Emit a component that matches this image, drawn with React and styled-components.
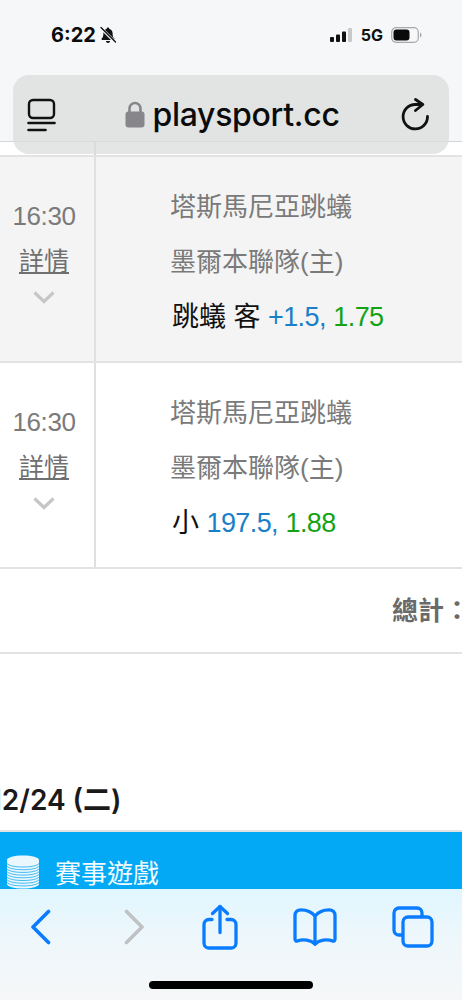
import React from "react";
import styled, { createGlobalStyle } from "styled-components";

const CJK = `"Noto Sans CJK TC", sans-serif`;

const GlobalStyle = createGlobalStyle`
  html, body {
    margin: 0;
    padding: 0;
    background: #fff;
  }
  body {
    font-family: "Liberation Sans", ${CJK};
  }
`;

const games = [
  { shaded: true, pick: "跳蟻 客", line: "+1.5,", odds: "1.75" },
  { shaded: false, pick: "小", line: "197.5,", odds: "1.88" },
];

export default function App() {
  return (
    <Screen>
      <GlobalStyle />
      <Page>
        <TopStub>
          <TimeStub />
          <div />
        </TopStub>
        {games.map((g, i) => (
          <GameRow key={i} $shaded={g.shaded}>
            <TimeCell>
              <Time>16:30</Time>
              <Detail>詳情</Detail>
              <ChevronDown />
            </TimeCell>
            <TeamCell>
              <Team>塔斯馬尼亞跳蟻</Team>
              <Team>墨爾本聯隊(主)</Team>
              <Pick>
                <PickName>{g.pick}</PickName> <Line>{g.line}</Line> <Odds>{g.odds}</Odds>
              </Pick>
            </TeamCell>
          </GameRow>
        ))}
        <TotalRow>
          <TotalLabel>總計：</TotalLabel>
        </TotalRow>
        <DateHeading>12/24 (二)</DateHeading>
        <GameBanner>
          <Coins />
          <BannerTitle>賽事遊戲</BannerTitle>
        </GameBanner>
      </Page>

      <TopChrome>
        <StatusBar>
          <StatusLeft>
            <Clock>6:22</Clock>
            <MutedBell />
          </StatusLeft>
          <StatusRight>
            <Signal />
            <Network>5G</Network>
            <Battery />
          </StatusRight>
        </StatusBar>
        <AddressBar>
          <ReaderIcon />
          <Address>
            <LockIcon />
            <Url>playsport.cc</Url>
          </Address>
          <ReloadIcon />
        </AddressBar>
      </TopChrome>

      <BottomChrome>
        <ToolRow>
          <BackIcon />
          <ForwardIcon />
          <ShareIcon />
          <BookIcon />
          <TabsIcon />
        </ToolRow>
        <HomeBar />
      </BottomChrome>
    </Screen>
  );
}

const MutedBell = () => (
  <svg width="18" height="18" viewBox="0 0 18 18" fill="#111">
    <path d="M9 1.500c-.7 0-1.200.5-1.200 1.200C5.600 3.300 4.400 5 4.400 7.200c0 3.200-.7 4.300-1.700 5.400-.5.6-.2 1.300.6 1.300h11.400c.8 0 1.100-.7.6-1.300-1-1.100-1.700-2.200-1.700-5.400 0-2.200-1.200-3.900-3.400-4.500 0-.7-.5-1.200-1.200-1.200z" />
    <path d="M7 15h4c0 1.100-.9 2-2 2s-2-.9-2-2z" />
    <path d="M1.500 1.500 16.500 16.500" stroke="#f6f7f8" strokeWidth="3" />
    <path d="M2 1.500 16.500 16" stroke="#111" strokeWidth="1.300" strokeLinecap="round" />
  </svg>
);

const Signal = () => (
  <svg width="23" height="14" viewBox="0 0 23 14">
    <rect x="0" y="9" width="4" height="5" rx="1" fill="#111" />
    <rect x="6" y="6.500" width="4" height="7.500" rx="1" fill="#111" />
    <rect x="12" y="3.500" width="4" height="10.500" rx="1" fill="#111" />
    <rect x="18" y="0" width="4" height="14" rx="1" fill="#c9c9c9" />
  </svg>
);

const Battery = () => (
  <svg width="31" height="16" viewBox="0 0 31 16">
    <rect x="0.700" y="0.700" width="26.600" height="14.600" rx="4.500" fill="none" stroke="#a9a9a9" strokeWidth="1.200" />
    <rect x="2.500" y="2.500" width="16" height="11" rx="3" fill="#0a0a0a" />
    <path d="M29 5.500c1 .4 1.500 1.300 1.500 2.500s-.5 2.100-1.500 2.500z" fill="#a9a9a9" />
  </svg>
);

const ReaderIcon = () => (
  <svg width="30" height="34" viewBox="0 0 30 34" fill="none" stroke="#111" strokeLinecap="round">
    <rect x="2" y="2" width="25" height="18" rx="4" strokeWidth="2.400" />
    <path d="M1.500 25h26" strokeWidth="2.600" />
    <path d="M1.500 32h17" strokeWidth="2.600" />
  </svg>
);

const LockIcon = () => (
  <svg width="20" height="27" viewBox="0 0 20 27">
    <path d="M4.500 12V7.500a5.500 5.500 0 0 1 11 0V12" fill="none" stroke="#86868b" strokeWidth="2.600" />
    <rect x="0.500" y="10.500" width="19" height="16" rx="3" fill="#86868b" />
  </svg>
);

const ReloadIcon = () => (
  <svg width="30" height="34" viewBox="0 0 30 34" fill="none" stroke="#111" strokeWidth="2.800" strokeLinecap="round" strokeLinejoin="round">
    <path d="M21 6.500H14.300A12.200 12.200 0 1 0 26.500 18.500" />
    <path d="M14.500 1.500 21.800 6.500 14.500 12.500" />
  </svg>
);

const BackIcon = () => (
  <svg width="22" height="36" viewBox="0 0 22 36" fill="none" stroke="#0a7cff" strokeWidth="3.600" strokeLinecap="round" strokeLinejoin="round">
    <path d="M18.500 2.500 3 18l15.500 15.500" />
  </svg>
);

const ForwardIcon = () => (
  <svg width="22" height="36" viewBox="0 0 22 36" fill="none" stroke="#bfc1c3" strokeWidth="3.600" strokeLinecap="round" strokeLinejoin="round">
    <path d="M3.500 2.500 19 18 3.500 33.500" />
  </svg>
);

const ShareIcon = () => (
  <svg width="36" height="46" viewBox="0 0 36 46" fill="none" stroke="#0a7cff" strokeWidth="3.300" strokeLinecap="round" strokeLinejoin="round">
    <path d="M10 15.500H7a5 5 0 0 0-5 5V39a5 5 0 0 0 5 5h22a5 5 0 0 0 5-5V20.500a5 5 0 0 0-5-5h-4" />
    <path d="M18 2.500v26" />
    <path d="M10.500 9.500 18 2.500l7.500 7" />
  </svg>
);

const BookIcon = () => (
  <svg width="44" height="38" viewBox="0 0 44 38" fill="none" stroke="#0a7cff" strokeWidth="3.300" strokeLinecap="round" strokeLinejoin="round">
    <path d="M22 8C18 3 12 1.800 8 1.800 4 1.800 2 4 2 7.500v23.500c0 1.700 1.100 2.400 2.600 1.900C10 31 18 32 22 36c4-4 12-5 17.400-3.100 1.500.5 2.600-.2 2.600-1.900V7.500c0-3.500-2-5.700-6-5.700C32 1.800 26 3 22 8z" />
    <path d="M22 8v28" />
  </svg>
);

const TabsIcon = () => (
  <svg width="42" height="42" viewBox="0 0 42 42" fill="none" stroke="#0a7cff" strokeWidth="3.300" strokeLinejoin="round">
    <path d="M10 29H7a5 5 0 0 1-5-5V7a5 5 0 0 1 5-5h18a5 5 0 0 1 5 5v4" />
    <rect x="11" y="11" width="29" height="29" rx="5" />
  </svg>
);

const Coins = () => (
  <svg width="34" height="34" viewBox="0 0 34 34" fill="none">
    <path d="M1 5c0-2.500 7-4.500 16-4.500S33 2.500 33 5v24c0 2.500-7 4.500-16 4.500S1 31.500 1 29z" fill="#eaf8fe" />
    {[8.500, 11.200, 13.900, 16.600, 19.300, 22, 24.700, 27.400].map(y => (
      <path key={y} d={`M1 ${y}c2 2.300 8 3.500 16 3.500S31 ${y + 2.300} 33 ${y}`} stroke="#2fb2f2" strokeWidth="0.900" />
    ))}
  </svg>
);

const ChevronDown = () => (
  <ChevronSvg width="22" height="13" viewBox="0 0 22 13" fill="none" stroke="#c6c6c6" strokeWidth="3.200" strokeLinejoin="miter">
    <path d="M1.500 1.500 11 10.500l9.500-9" />
  </ChevronSvg>
);

const Screen = styled.div`
  position: relative;
  width: 462px;
  height: 1000px;
  overflow: hidden;
  background: #fff;
`;

const Page = styled.main`
  display: flex;
  flex-direction: column;
  padding-top: 141px;
`;

const TopStub = styled.div`
  display: grid;
  grid-template-columns: 96px 1fr;
  height: 13px;
  border-top: 1px solid #d6d6d6;
`;

const TimeStub = styled.div`
  border-right: 2px solid #d9d9d9;
`;

const GameRow = styled.div`
  display: grid;
  grid-template-columns: 96px 1fr;
  height: 204px;
  border-top: 2px solid #e3e3e3;
  background: ${p => (p.$shaded ? "#f4f4f4" : "#fff")};
`;

const TimeCell = styled.div`
  display: flex;
  flex-direction: column;
  align-items: center;
  padding: 44px 6px 0 0;
  border-right: 2px solid #e0e0e0;
`;

const Time = styled.div`
  font-size: 26px;
  line-height: 30px;
  color: #7a7a7a;
  letter-spacing: -0.4px;
`;

const Detail = styled.div`
  margin-top: 15px;
  font-size: 25px;
  line-height: 30px;
  color: #6f6f6f;
  text-decoration: underline;
  text-underline-offset: 2px;
`;

const ChevronSvg = styled.svg`
  margin-top: 15px;
`;

const TeamCell = styled.div`
  display: flex;
  flex-direction: column;
  padding: 32px 0 0 74px;
  gap: 19px;
`;

const Team = styled.div`
  font-size: 26px;
  line-height: 36px;
  color: #7a7a7a;
  white-space: nowrap;
`;

const Pick = styled.div`
  margin-left: 2px;
  font-size: 27px;
  line-height: 36px;
  white-space: nowrap;
`;

const PickName = styled.span`
  color: #111;
`;

const Line = styled.span`
  color: #1a7fc8;
  letter-spacing: -0.6px;
`;

const Odds = styled.span`
  color: #13a313;
  letter-spacing: -0.6px;
`;

const TotalRow = styled.div`
  display: flex;
  justify-content: flex-end;
  align-items: center;
  height: 79px;
  padding-bottom: 4px;
  border-top: 2px solid #e3e3e3;
  border-bottom: 2px solid #e3e3e3;
`;

const TotalLabel = styled.span`
  flex: none;
  margin-right: -8px;
  font-size: 26px;
  font-weight: 700;
  color: #6a6a6a;
`;

const DateHeading = styled.h2`
  margin: 128px 0 0 -10px;
  height: 48px;
  font-family: Inter, ${CJK};
  font-size: 28px;
  line-height: 36px;
  font-weight: 600;
  color: #1a1a1a;
`;

const GameBanner = styled.div`
  display: flex;
  align-items: center;
  gap: 15px;
  height: 35px;
  padding: 22px 0 0 6px;
  border-top: 2px solid #e3e3e3;
  background: #03a9f4;
`;

const BannerTitle = styled.span`
  font-size: 26px;
  color: #f2fbff;
`;

const TopChrome = styled.header`
  position: absolute;
  top: 0;
  left: 0;
  width: 100%;
  background: linear-gradient(#f6f7f8 141px, transparent 141px);
`;

const StatusBar = styled.div`
  display: flex;
  justify-content: space-between;
  align-items: center;
  height: 69px;
  padding: 0 40px 6px 51px;
  font-family: Inter, sans-serif;
`;

const StatusLeft = styled.div`
  display: flex;
  align-items: center;
  gap: 3px;
`;

const StatusRight = styled.div`
  display: flex;
  align-items: center;
  gap: 8px;
`;

const Clock = styled.span`
  font-size: 20px;
  font-weight: 700;
  color: #0c0c0c;
`;

const Network = styled.span`
  font-size: 16px;
  font-weight: 700;
  color: #111;
`;

const AddressBar = styled.div`
  display: flex;
  align-items: center;
  justify-content: space-between;
  height: 79px;
  margin: 0 13px;
  padding: 0 18px 0 14px;
  border-radius: 16px;
  background: rgba(218, 219, 219, 0.72);
`;

const Address = styled.div`
  display: flex;
  align-items: center;
  gap: 7px;
  margin-left: 7px;
  font-family: Inter, sans-serif;
`;

const Url = styled.span`
  font-size: 32px;
  font-weight: 500;
  color: #0b0b0b;
  letter-spacing: -0.3px;
`;

const BottomChrome = styled.footer`
  position: absolute;
  left: 0;
  bottom: 0;
  width: 100%;
  height: 111px;
  background: linear-gradient(#e0f6ff, #eef7fb 45%, #f6f7f8);
`;

const ToolRow = styled.div`
  display: grid;
  grid-template-columns: 93px 79px 91px 99px auto;
  align-items: center;
  height: 75px;
  padding-left: 30px;
`;

const HomeBar = styled.div`
  width: 164px;
  height: 8px;
  margin: 17px auto 0;
  border-radius: 4px;
  background: #000;
`;
